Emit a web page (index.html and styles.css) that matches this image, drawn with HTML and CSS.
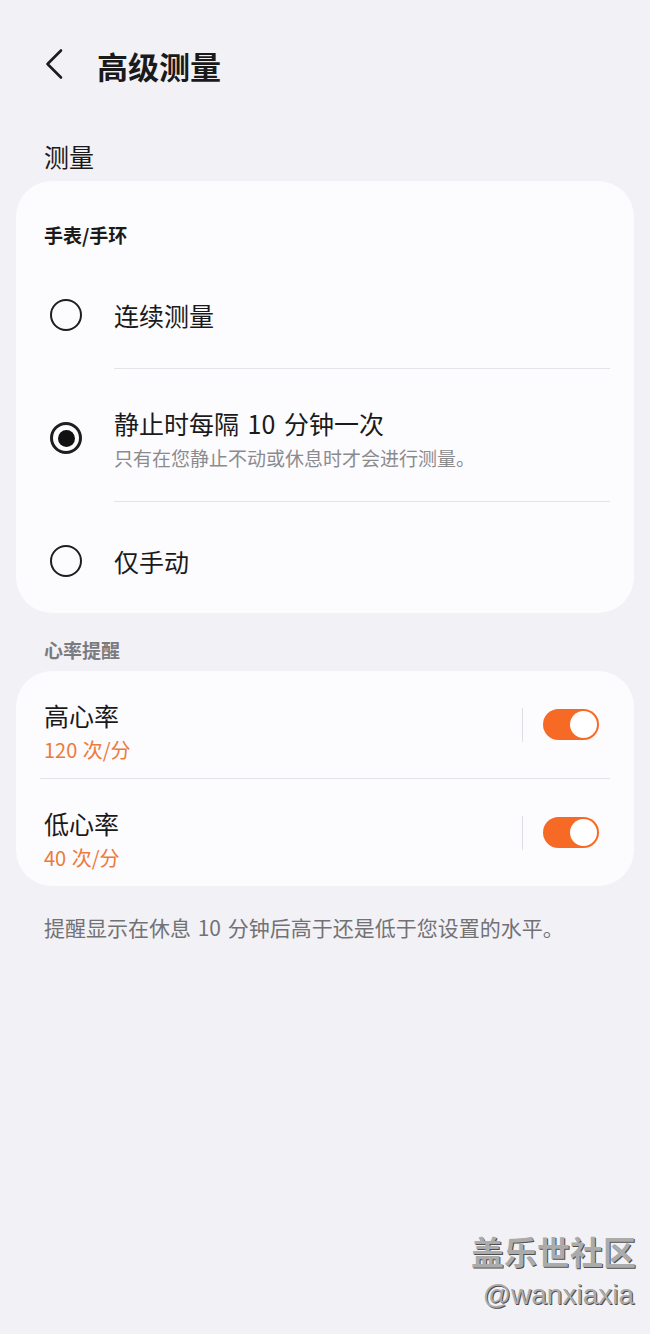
FILE: index.html
```html
<html>
<head>
  <meta name="viewport" content="width=device-width, initial-scale=1.0">
<link rel="stylesheet" href="styles.css">
</head>
<body>

<div class="topbar">
  <svg class="back" width="22" height="32" viewBox="0 0 22 32">
    <polyline points="17,2.5 3.5,16 17,29.5" fill="none" stroke="#1c1c1c" stroke-width="2.6" stroke-linecap="round" stroke-linejoin="round"/>
  </svg>
  <h1 class="title">高级测量</h1>
</div>

<div class="section-title">测量</div>

<div class="card">
  <div class="card-head">手表/手环</div>

  <div class="opt opt-first">
    <span class="radio"></span>
    <div class="opt-text">连续测量</div>
  </div>
  <div class="sep"></div>

  <div class="opt opt-sub">
    <span class="radio on"></span>
    <div class="opt-text">
      <div class="opt-main">静止时每隔 10 分钟一次</div>
      <div class="opt-desc">只有在您静止不动或休息时才会进行测量。</div>
    </div>
  </div>
  <div class="sep"></div>

  <div class="opt opt-last">
    <span class="radio"></span>
    <div class="opt-text">仅手动</div>
  </div>
</div>

<div class="group-title">心率提醒</div>

<div class="card">
  <div class="alert-row">
    <div class="alert-text">
      <div class="alert-name">高心率</div>
      <div class="alert-value">120 次/分</div>
    </div>
    <span class="vbar"></span>
    <span class="switch"><span class="knob"></span></span>
  </div>
  <div class="sep sep-wide"></div>
  <div class="alert-row">
    <div class="alert-text">
      <div class="alert-name">低心率</div>
      <div class="alert-value">40 次/分</div>
    </div>
    <span class="vbar"></span>
    <span class="switch"><span class="knob"></span></span>
  </div>
</div>

<p class="footnote">提醒显示在休息 10 分钟后高于还是低于您设置的水平。</p>

<div class="watermark">
  <div class="wm-big">盖乐世社区</div>
  <div class="wm-small">@wanxiaxia</div>
</div>

</body>
</html>
```

FILE: styles.css
```css
body {
  margin: 0;
  background: #f2f1f6;
  font-family: "Noto Sans CJK SC", "Noto Sans", sans-serif;
  color: #1a1a1a;
  min-height: 1334px;
  position: relative;
}

.topbar {
  display: flex;
  align-items: center;
  margin-top: 46px;
  padding-left: 44px;
  height: 40px;
}
.back {
  display: block;
  margin-top: -4px;
}
.title {
  margin: 0 0 0 31px;
  font-size: 31px;
  font-weight: 700;
  line-height: 40px;
}

.section-title {
  margin: 53px 0 8px 44px;
  font-size: 25px;
  line-height: 34px;
}

.card {
  margin: 0 16px;
  background: #fcfbfe;
  border-radius: 36px;
}

.card-head {
  padding: 41px 0 13px 28px;
  font-size: 19px;
  font-weight: 700;
  line-height: 26px;
}

.opt {
  display: flex;
  align-items: center;
  padding-left: 34px;
  font-size: 25px;
}
.opt-first { height: 107px; }
.opt-sub { height: 132px; }
.opt-last { height: 104px; padding-top: 7px; }

.radio {
  box-sizing: border-box;
  width: 32px;
  height: 32px;
  border: 2.2px solid #1e1e1e;
  border-radius: 50%;
  flex: none;
  margin-right: 32px;
  display: flex;
  align-items: center;
  justify-content: center;
}
.radio.on {
  border-width: 3px;
  margin-top: 6px;
}
.radio.on::after {
  content: "";
  width: 17px;
  height: 17px;
  border-radius: 50%;
  background: #111;
}

.opt-text {
  line-height: 32px;
}
.opt-main {
  word-spacing: 3px;
}
.opt-sub .opt-text {
  padding-top: 8px;
}
.opt-desc {
  margin-top: 6px;
  font-size: 19px;
  line-height: 26px;
  color: #8b8b8e;
}

.sep {
  height: 1px;
  background: #e4e3e8;
  margin: 0 24px 0 98px;
}
.sep-wide {
  margin: 0 24px;
}

.group-title {
  margin: 24px 0 8px 44px;
  font-size: 19px;
  font-weight: 700;
  line-height: 26px;
  color: #7b7b7e;
}

.alert-row {
  display: flex;
  align-items: center;
  padding: 0 35px 0 28px;
  height: 107px;
}
.alert-text {
  flex: 1;
  padding-top: 13px;
}
.alert-name {
  font-size: 25px;
  line-height: 32px;
}
.alert-value {
  margin-top: 6px;
  font-size: 20px;
  line-height: 26px;
  color: #ec7a3b;
  word-spacing: 1px;
}
.vbar {
  width: 1.5px;
  height: 34px;
  background: #dedde2;
  margin-right: 20px;
}
.switch {
  box-sizing: border-box;
  width: 56px;
  height: 31px;
  border-radius: 16px;
  background: #f76a26;
  padding: 2px;
  display: flex;
  justify-content: flex-end;
}
.knob {
  width: 27px;
  height: 27px;
  border-radius: 50%;
  background: #fff;
}

.footnote {
  margin: 26px 44px 0;
  font-size: 21px;
  line-height: 30px;
  color: #727275;
  word-spacing: 2px;
}

.watermark {
  position: absolute;
  right: 14px;
  top: 1231px;
  text-align: right;
  color: #ababab;
  text-shadow: 1px 1px 0 #4e4e4e;
}
.wm-big {
  font-size: 33px;
  font-weight: 700;
  line-height: 40px;
}
.wm-small {
  font-family: "Liberation Sans", sans-serif;
  font-size: 28px;
  line-height: 32px;
  margin-top: 8px;
  padding-right: 2px;
}
```
